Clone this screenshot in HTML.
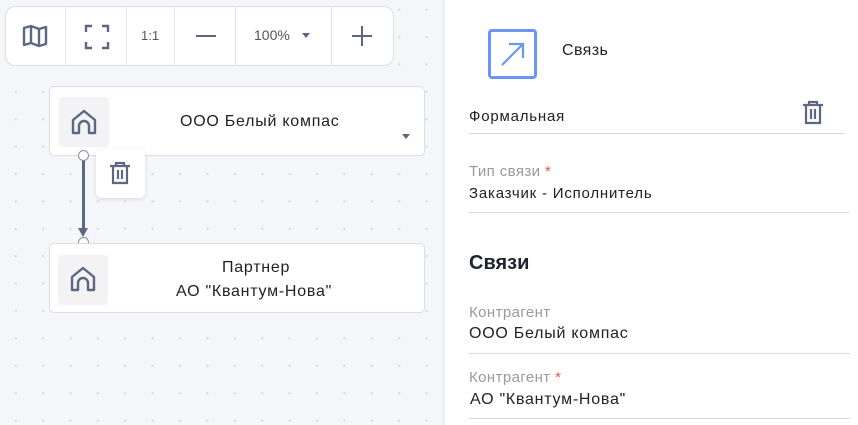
<!DOCTYPE html>
<html><head><meta charset="utf-8"><style>
*{margin:0;padding:0;box-sizing:border-box}
body{width:858px;height:425px;overflow:hidden;font-family:"Liberation Sans","Noto Sans CJK SC",sans-serif;background:#fff;position:relative;color:#222}
#canvas{position:absolute;left:0;top:0;width:442px;height:425px;background-color:#f5f6fa;background-image:radial-gradient(circle,#d8dae0 1px,transparent 1.3px);background-size:27.4px 27.4px;background-position:2px -4px}
.abs{position:absolute}
.tb{left:5px;top:6px;width:389px;height:60px;background:#fff;border:1px solid #dcdde2;border-radius:10px}
.div{position:absolute;top:0;width:1px;height:58px;background:#e2e3e7}
.node{background:#fff;border:1px solid #dcdde2;border-radius:5px}
.ib{background:#f3f3f5;border-radius:4px}
.t{position:absolute;font-size:15px;white-space:nowrap}
.v16{font-size:16px;letter-spacing:0.75px}
.v15{font-size:15px;letter-spacing:0.8px}
.lab{color:#9a9a9a;font-size:15px;letter-spacing:0.4px}
.line{position:absolute;height:1px;background:#d9dae0}
.req{color:#f05050}
</style></head><body>
<div id="canvas">
<div class="abs tb">
 <div class="div" style="left:59px"></div><div class="div" style="left:120px"></div><div class="div" style="left:168px"></div><div class="div" style="left:229px"></div><div class="div" style="left:325px"></div>
 <svg class="abs" style="left:15px;top:16px" width="28" height="26" viewBox="0 0 28 26" fill="none" stroke="#5c6783" stroke-width="2.4" stroke-linejoin="round"><path d="M3 5l7-2 8 3 7-2v17l-7 2-8-3-7 2z M10 3v17 M18 6v17"/></svg>
 <svg class="abs" style="left:78px;top:17px" width="26" height="26" viewBox="0 0 26 26" fill="none" stroke="#5c6783" stroke-width="2.4"><path d="M2 8V2h6 M18 2h6v6 M24 18v6h-6 M8 24H2v-6"/></svg>
 <div class="t" style="left:135px;top:21px;font-size:13px;color:#555">1:1</div>
 <div class="abs" style="left:190px;top:28px;width:20px;height:2.4px;background:#5c6783"></div>
 <div class="t" style="left:248px;top:20px;font-size:14px;color:#555">100%</div>
 <div class="abs" style="left:296px;top:26px;border:4px solid transparent;border-top:5px solid #5c6783"></div>
 <div class="abs" style="left:346px;top:28px;width:20px;height:2.4px;background:#5c6783"></div>
 <div class="abs" style="left:355px;top:19px;width:2.4px;height:20px;background:#5c6783"></div>
</div>
<div class="abs node" style="left:49px;top:86px;width:376px;height:70px"></div>
<div class="abs ib" style="left:59px;top:97px;width:50px;height:50px"></div>
<svg class="abs" style="left:69px;top:107px" width="30" height="30" viewBox="0 0 30 30" fill="none" stroke="#5c6783" stroke-width="2.4" stroke-linejoin="round"><path d="M4 26V13L15 4l11 9v13h-6v-7a5 5 0 0 0-10 0v7z"/></svg>
<div class="t v16" style="left:180px;top:113px">ООО Белый компас</div>
<div class="abs" style="left:402px;top:134px;border:4px solid transparent;border-top:5px solid #5c6783"></div>
<div class="abs" style="left:82px;top:158px;width:3px;height:72px;background:#5c6783"></div>
<div class="abs" style="left:78px;top:228px;border:5px solid transparent;border-top:9px solid #5c6783;border-bottom:0"></div>
<div class="abs" style="left:78px;top:150px;width:11px;height:11px;border-radius:50%;background:#fff;border:1.5px solid #8a90a0"></div>
<div class="abs" style="left:78px;top:237px;width:11px;height:11px;border-radius:50%;background:#fff;border:1.5px solid #8a90a0"></div>
<div class="abs" style="left:96px;top:149px;width:49px;height:49px;background:#fff;border-radius:5px;box-shadow:0 1px 4px rgba(0,0,0,.12)"></div>
<svg class="abs" style="left:107px;top:160px" width="26" height="26" viewBox="0 0 26 26" fill="none" stroke="#5c6783" stroke-width="2.2"><path d="M3 6h20 M9 6V3h8v3 M6 6v17h14V6 M11 10v9 M15 10v9"/></svg>
<div class="abs node" style="left:49px;top:243px;width:376px;height:70px"></div>
<div class="abs ib" style="left:58px;top:255px;width:50px;height:50px"></div>
<svg class="abs" style="left:68px;top:264px" width="30" height="30" viewBox="0 0 30 30" fill="none" stroke="#5c6783" stroke-width="2.4" stroke-linejoin="round"><path d="M4 26V13L15 4l11 9v13h-6v-7a5 5 0 0 0-10 0v7z"/></svg>
<div class="t v16" style="left:222px;top:259px">Партнер</div>
<div class="t v16" style="left:176px;top:283px">АО "Квантум-Нова"</div>
</div>
<div class="abs" style="left:442px;top:0;width:3px;height:425px;background:#eef0f5"></div>
<div class="abs" style="left:488px;top:29px;width:49px;height:50px;border:3.5px solid #6b96f5;border-radius:4px"></div>
<svg class="abs" style="left:499px;top:40px" width="28" height="28" viewBox="0 0 28 28" fill="none" stroke="#6b96f5" stroke-width="2.2"><path d="M3 25L24 4 M10 4h14v14"/></svg>
<div class="t" style="left:562px;top:42px;font-size:16px;letter-spacing:0.4px">Связь</div>
<div class="t v15" style="left:469px;top:108px">Формальная</div>
<svg class="abs" style="left:800px;top:99px" width="26" height="27" viewBox="0 0 26 27" fill="none" stroke="#5c6783" stroke-width="2.2"><path d="M3 6h20 M9 6V3h8v3 M6 6v18h14V6 M11 10v10 M15 10v10"/></svg>
<div class="line" style="left:469px;top:133px;width:376px"></div>
<div class="t lab" style="left:469px;top:163px">Тип связи <span class="req">*</span></div>
<div class="t v15" style="left:469px;top:185px">Заказчик - Исполнитель</div>
<div class="line" style="left:469px;top:212px;width:381px"></div>
<div class="t" style="left:469px;top:252px;font-size:20px;font-weight:bold;color:#1e2330">Связи</div>
<div class="t lab" style="left:469px;top:304px">Контрагент</div>
<div class="t v16" style="left:469px;top:325px">ООО Белый компас</div>
<div class="line" style="left:469px;top:353px;width:381px"></div>
<div class="t lab" style="left:469px;top:369px">Контрагент <span class="req">*</span></div>
<div class="t v16" style="left:470px;top:391px">АО "Квантум-Нова"</div>
<div class="line" style="left:469px;top:418px;width:381px"></div>
</body></html>
